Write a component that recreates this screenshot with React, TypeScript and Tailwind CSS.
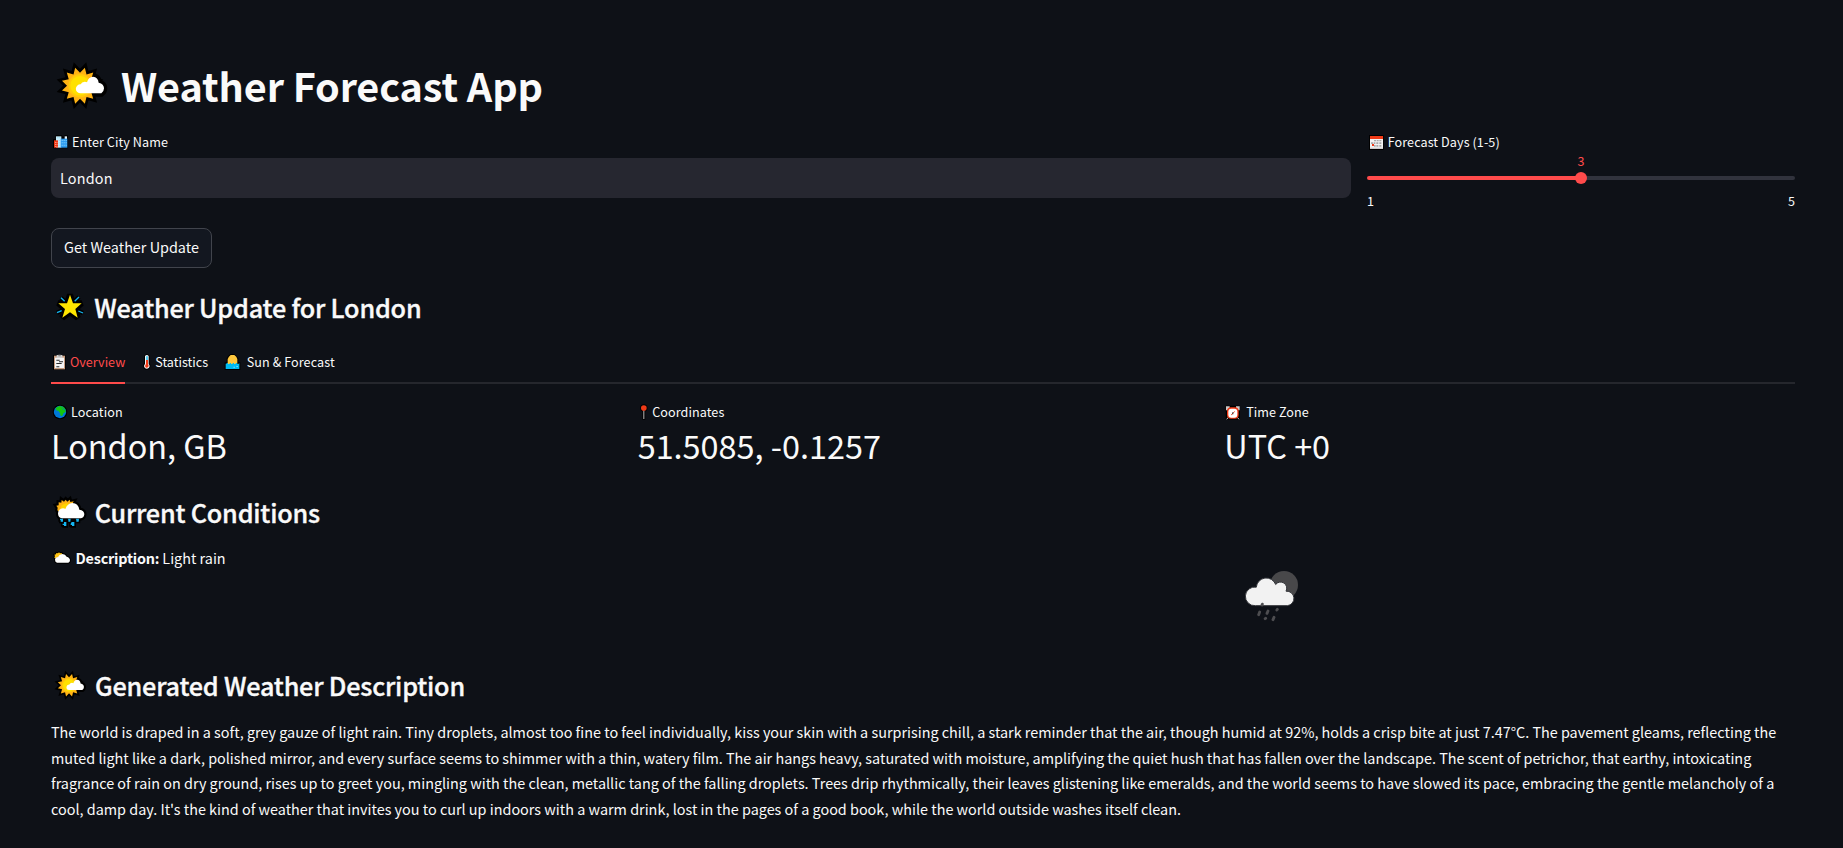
import type { ReactNode } from "react";

type IconProps = { box: string; className: string; children: ReactNode };

function Icon({ box, className, children }: IconProps) {
  return (
    <svg viewBox={box} className={"block shrink-0 " + className} aria-hidden="true">
      {children}
    </svg>
  );
}

const SUN = Array.from({ length: 24 }, (_, i) => {
  const r = i % 2 ? 39 : 56;
  const a = ((i * 15 + 15) * Math.PI) / 180;
  return `${(118 + r * Math.sin(a)).toFixed(1)},${(109 - r * Math.cos(a)).toFixed(1)}`;
}).join(" ");

const CLOUD = "M118 132a13.500 13.500 0 0 1 2-27q3-8 12-8 5 0 7 2 4-16 18-17 15 1 17 18 16 4 16 17 0 9-8 15z";

function SunCloud({ className }: { className: string }) {
  return (
    <Icon box="46 35 158 150" className={className}>
      <g fill="#000" stroke="#000" strokeWidth="20" strokeLinejoin="miter">
        <polygon points={SUN} strokeWidth="16" />
        <path d={CLOUD} />
      </g>
      <polygon points={SUN} fill="#ffb314" />
      <circle cx="118" cy="109" r="35" fill="#ffcb0a" />
      <circle cx="118" cy="109" r="29" fill="#ffe100" />
      <path d={CLOUD} fill="#fff" />
    </Icon>
  );
}

function City() {
  return (
    <Icon box="33 256 63 48" className="h-4 w-[21px]">
      <path d="M39 272h8v-12h20v4h6v-4h11v39H39z" fill="#000" />
      <path d="M48 263h16v34H48z" fill="#c9eefb" />
      <path d="M74 263h7v10h-7z" fill="#e6f5fc" />
      <path d="M42 275h12v22H42z" fill="#f03a17" />
      <path d="M62 270h20v27H62z" fill="#2d9bf0" />
      <path d="M45 280h2v3h-2zm5 0h2v3h-2zm-5 6h2v3h-2zm5 0h2v3h-2zm-5 6h2v3h-2zm5 0h2v3h-2z" fill="#ffc5b8" />
      <path d="M52 266h3v3h-3zm6 0h3v3h-3zm-2 8h3v3h-3zm0 7h3v3h-3zm0 7h3v3h-3zM65 274h3v3h-3zm6 0h3v3h-3zm6 0h3v3h-3zm-12 7h3v3h-3zm6 0h3v3h-3zm6 0h3v3h-3zm-12 7h3v3h-3zm6 0h3v3h-3zm6 0h3v3h-3z" fill="#8fd6f8" />
    </Icon>
  );
}

function Calendar() {
  return (
    <Icon box="51 42 62 51" className="h-[17px] w-[20.700px]">
      <path d="M57 45h44v45H57z" fill="#000" />
      <path d="M60 57h39v30H60z" fill="#f2f2f2" />
      <path d="M60 48h39v9H60z" fill="#f03a17" />
      <path d="M72 60h6v4h-6zm8 0h6v4h-6zm8 0h6v4h-6zM63 67h6v5h-6zm8 0h5v5h-5zm8 0h6v5h-6zm9 0h6v5h-6zM72 75h5v5h-5zm7 0h6v5h-6zm9 0h6v5h-6z" fill="#a8a8a8" />
      <path d="M60 83h39v4H60z" fill="#ccc" />
      <path d="M66 72h6v6h-6z" fill="#f03a17" />
    </Icon>
  );
}

function GlowingStar() {
  const star = "M90 243l9 26h26l-19 17 7 26-23-16-23 16 8-26-20-17h26z";
  return (
    <Icon box="33 229 108 102" className="mr-[7.300px] h-[34px] w-9">
      <g stroke="#000" strokeLinejoin="miter" strokeMiterlimit="2" fill="#000">
        <path d={star} strokeWidth="18" />
        <path d="M63 252l11 11M117 250l-13 13M51 297l14-6M129 298l-14-6" strokeWidth="13" />
      </g>
      <path d="M63 252l11 11M117 250l-13 13M51 297l14-6M129 298l-14-6" stroke="#14b4f0" strokeWidth="4" />
      <path d={star} fill="#ffe600" />
    </Icon>
  );
}

function Clipboard() {
  return (
    <Icon box="33 417 54 51" className="mr-px h-[17px] w-[18px]">
      <path d="M39 420h38v45H39z" fill="#000" />
      <path d="M42 422h33v41H42z" fill="#c69c80" />
      <path d="M45 428h27v31H45z" fill="#f5f5f5" />
      <path d="M50 420h17v9H50z" fill="#d0d0d0" />
      <path d="M55 419h7v5h-7z" fill="#888" />
      <path d="M49 434h10v3H49zm8 5h12v3H57zm-8 5h16v3H49zm0 10h9v3h-9z" fill="#2a2a2a" />
    </Icon>
  );
}

function Thermometer() {
  return (
    <Icon box="303 417 39 51" className="mr-px h-[17px] w-[13px]">
      <path d="M312 422q8-9 17 0v23q5 8-1 16-8 7-16 0-5-8 0-16z" fill="#000" />
      <path d="M315 423q6-6 11 0v23q5 6 1 12-7 6-13 0-4-6 1-12z" fill="#f4f4f4" />
      <path d="M318 424h6v12h-6z" fill="#53cdf5" />
      <path d="M318 435h6v12q4 5 0 10-6 3-8-1-2-5 2-9z" fill="#f03a17" />
    </Icon>
  );
}

function Sunrise() {
  return (
    <Icon box="555 417 60 51" className="mr-[2.600px] h-[17px] w-5">
      <path d="M563 442v-12q3-8 11-13h12q8 5 12 13v12h6v23h-47v-23z" fill="#000" />
      <path d="M566 450v-18q3-8 9-12h11q7 4 9 12v18z" fill="#ffc83d" />
      <path d="M560 446h3v-2h4v3h5v-3h4v3h5v-3h4v3h5v-3h4v3h5v-2h2v17h-41z" fill="#00bcf2" />
      <path d="M583 455h5v3h-5zm9-2h5v3h-5z" fill="#6bdcff" />
    </Icon>
  );
}

function Earth() {
  return (
    <Icon box="33 24 60 54" className="h-[18px] w-5">
      <circle cx="60" cy="51" r="22" fill="#000" />
      <circle cx="60" cy="51" r="18.500" fill="#0078d7" />
      <path d="M48 38l10-5 12 2 6 7 1 9-6 3-4 8-5 1-2-9-4-5-6-1-4-5z" fill="#16c60c" />
      <path d="M44 40l4 3 3 5 6 1M66 37l4 6 6 2" stroke="#0078d7" strokeWidth="2" fill="none" />
    </Icon>
  );
}

function Pin() {
  return (
    <Icon box="54 24 42 54" className="mr-[0.500px] h-[18px] w-[14px]">
      <path d="M67 44h9v30h-9z" fill="#000" />
      <circle cx="71.500" cy="39" r="11" fill="#000" />
      <path d="M70 46h3v26h-3z" fill="#bdbdbd" />
      <circle cx="71.500" cy="39" r="8.500" fill="#f03a17" />
    </Icon>
  );
}

function AlarmClock() {
  return (
    <Icon box="45 24 60 54" className="mr-[1.800px] h-[18px] w-5">
      <path d="M50 32h43v42H50z" fill="#000" />
      <path d="M51 34h11v5l-7 7h-4zM81 34h11v12h-4l-7-7z" fill="#ccc" />
      <path d="M53 73l5-6M90 73l-5-6" stroke="#ccc" strokeWidth="3" />
      <rect x="54" y="37" width="35" height="34" rx="12" fill="#f03a17" />
      <rect x="58" y="41" width="27" height="27" rx="9" fill="#fff" />
      <path d="M66 60l6-5 5-6" stroke="#f03a17" strokeWidth="2.500" fill="none" />
      <path d="M70 52h3v6h-3z" fill="#222" />
    </Icon>
  );
}

function SunRain() {
  const cloud = "M66 373q-12-2-12-15 1-14 15-15 5 0 7 2 6-17 21-18 18 1 21 20 15 2 15 14-1 10-10 12z";
  const sun = "M52 349l1-8-4-6 7-1v-9l8 1 1-8 7 5 5-6 5 6 7-6 2 7 10-2-5 10-10 15-20 12z";
  const drops = "M60 374h9v9h-7v-5h-2zm23 0h9l-1 9h-6v-6zm24 0h10l-1 9h-7v-5zM72 384h7v12h-7v-3h-4v-4h4zm23 0h8v12h-7v-3h-4v-4z";
  return (
    <Icon box="33 303 108 102" className="mr-[7.700px] h-[34px] w-9">
      <g fill="#000" stroke="#000" strokeWidth="13">
        <path d={sun} />
        <path d={cloud} />
        <path d={drops} strokeWidth="10" />
      </g>
      <path d={sun} fill="#ffb314" />
      <path d="M61 347q2-16 18-19l14 2-10 18-20 6z" fill="#ffd500" />
      <path d={drops} fill="#14b4f0" />
      <path d={cloud} fill="#fff" />
    </Icon>
  );
}

function SunBehindCloud() {
  const cloud = "M51 500q-6-2-6-9 1-8 9-8 3-8 13-9 9 0 13 8 10 3 10 11 0 5-5 7z";
  const sun = "M43 485l2-5-2-4 5-1 1-4 5 1 3-3 3 3 5-1 1 4-6 6-14 6z";
  return (
    <Icon box="33 465 66 42" className="mr-[2.500px] h-3.5 w-[22px]">
      <g fill="#000" stroke="#000" strokeWidth="6">
        <path d={sun} />
        <path d={cloud} />
      </g>
      <path d={sun} fill="#ffc414" />
      <path d={cloud} fill="#fff" />
    </Icon>
  );
}

function RainyNight() {
  const cloud =
    "M136 632a28 28 0 1 1 3-55.500a30 30 0 0 1 58-8a18.500 18.500 0 0 1 31 20a21.500 21.500 0 0 1 4 43.500z";
  return (
    <Icon box="102 522 168 162" className="h-[54px] w-14">
      <circle cx="222" cy="570" r="42" fill="#48484a" />
      <path d={cloud} fill="#f2f2f2" stroke="#33353a" strokeWidth="3" />
      <g stroke="#4d4d50" strokeWidth="8.500" strokeLinecap="round">
        <path d="M149 651l-3 8M174 648l-3 7M202 643l-1.500 2M167 670l-1.500 1M192 667l-3 7M157 627.500l-1 2.500" />
      </g>
    </Icon>
  );
}

function Heading({ icon, children }: { icon: ReactNode; children: string }) {
  return (
    <h2 className="flex h-10 items-center text-[25.200px] leading-10 font-medium tracking-[-0.190px] [-webkit-text-stroke:0.350px]">
      {icon}
      <span>{children}</span>
    </h2>
  );
}

function Metric({ icon, label, value }: { icon: ReactNode; label: string; value: string }) {
  return (
    <div className="min-w-0">
      <div className="flex h-5 items-center text-[12.600px] leading-5 tracking-[0.080px]">
        {icon}
        <span>{label}</span>
      </div>
      <div className="h-[46px] text-[32.400px] leading-[46px]">{value}</div>
    </div>
  );
}

const LINES = [
  "The world is draped in a soft, grey gauze of light rain. Tiny droplets, almost too fine to feel individually, kiss your skin with a surprising chill, a stark reminder that the air, though humid at 92%, holds a crisp bite at just 7.47°C. The pavement gleams, reflecting the",
  "muted light like a dark, polished mirror, and every surface seems to shimmer with a thin, watery film. The air hangs heavy, saturated with moisture, amplifying the quiet hush that has fallen over the landscape. The scent of petrichor, that earthy, intoxicating",
  "fragrance of rain on dry ground, rises up to greet you, mingling with the clean, metallic tang of the falling droplets. Trees drip rhythmically, their leaves glistening like emeralds, and the world seems to have slowed its pace, embracing the gentle melancholy of a",
  "cool, damp day. It's the kind of weather that invites you to curl up indoors with a warm drink, lost in the pages of a good book, while the world outside washes itself clean.",
];

export default function App() {
  return (
    <div className="h-[848px] overflow-hidden bg-[#0e1117] px-12 pt-14 pl-[51px] font-['Noto_Sans_CJK_SC','Noto_Sans',sans-serif] whitespace-nowrap text-[#fafafa]">
      <h1 className="flex h-[58px] items-center text-[39.600px] leading-[58px] font-bold tracking-[-0.100px]">
        <SunCloud className="mt-0.5 mr-[12.300px] ml-[5px] h-[50px] w-[52.700px]" />
        <span>Weather Forecast App</span>
      </h1>

      <div className="mt-[18px] grid w-[1744px] grid-cols-[1300px_428px] gap-4">
        <div>
          <div className="flex h-5 items-center text-[12.600px] leading-5 tracking-[0.080px]">
            <City />
            <span>Enter City Name</span>
          </div>
          <div className="mt-1.5 h-10 rounded-lg bg-[#262730] px-[9px] text-[14.400px] leading-10 tracking-[0.200px]">
            London
          </div>
        </div>
        <div className="text-[12.600px] leading-5">
          <div className="flex h-5 items-center tracking-[0.080px]">
            <Calendar />
            <span>Forecast Days (1-5)</span>
          </div>
          <div className="-mt-px text-center text-[#ff4b4b]">3</div>
          <div className="mt-px flex h-3 items-center">
            <div className="h-1 flex-1 rounded-l-full bg-[#ff4b4b]" />
            <div className="relative z-10 -mx-1.5 size-3 rounded-full bg-[#ff4b4b]" />
            <div className="h-1 flex-1 rounded-r-full bg-[#31333d]" />
          </div>
          <div className="mt-[7px] flex justify-between">
            <span>1</span>
            <span>5</span>
          </div>
        </div>
      </div>

      <button className="mt-[17px] flex h-10 w-[161px] justify-center rounded-lg border border-[#41444c] bg-[#131720] text-[14.400px] leading-9">
        Get Weather Update
      </button>

      <div className="mt-[19px]">
        <Heading icon={<GlowingStar />}>Weather Update for London</Heading>
      </div>

      <div className="mt-[17px] flex h-10 w-[1744px] gap-4 border-b-2 border-[#25272d] text-[12.600px] leading-9">
        <div className="flex h-10 border-b-2 border-[#ff4b4b] text-[#ff4b4b]">
          <div className="flex h-9 items-center">
            <Clipboard />
            <span>Overview</span>
          </div>
        </div>
        <div className="flex h-9 items-center">
          <Thermometer />
          <span>Statistics</span>
        </div>
        <div className="flex h-9 items-center tracking-[0.080px]">
          <Sunrise />
          <span>Sun &amp; Forecast</span>
        </div>
      </div>

      <div className="mt-[18px] grid w-[1744px] grid-cols-3 gap-4">
        <Metric icon={<Earth />} label="Location" value="London, GB" />
        <Metric icon={<Pin />} label="Coordinates" value="51.5085, -0.1257" />
        <Metric icon={<AlarmClock />} label="Time Zone" value="UTC +0" />
      </div>

      <div className="mt-6">
        <Heading icon={<SunRain />}>Current Conditions</Heading>
      </div>

      <div className="mt-4 grid h-[100px] w-[1744px] grid-cols-[1174px_1fr] text-[14.400px] leading-5">
        <div className="flex h-5 items-center">
          <SunBehindCloud />
          <span className="font-bold tracking-[-0.200px]">Description:</span>
          <span className="ml-[3px]">Light rain</span>
        </div>
        <div className="pt-[21px] pl-[19px]">
          <RainyNight />
        </div>
      </div>

      <div className="mt-[17px]">
        <Heading icon={<SunCloud className="mr-2 ml-[3px] h-[31px] w-[33px]" />}>Generated Weather Description</Heading>
      </div>

      <p className="mt-[14px] text-[14.400px] leading-[25.600px]">
        {LINES.map((line) => (
          <span key={line} className="block">
            {line}
          </span>
        ))}
      </p>
    </div>
  );
}
